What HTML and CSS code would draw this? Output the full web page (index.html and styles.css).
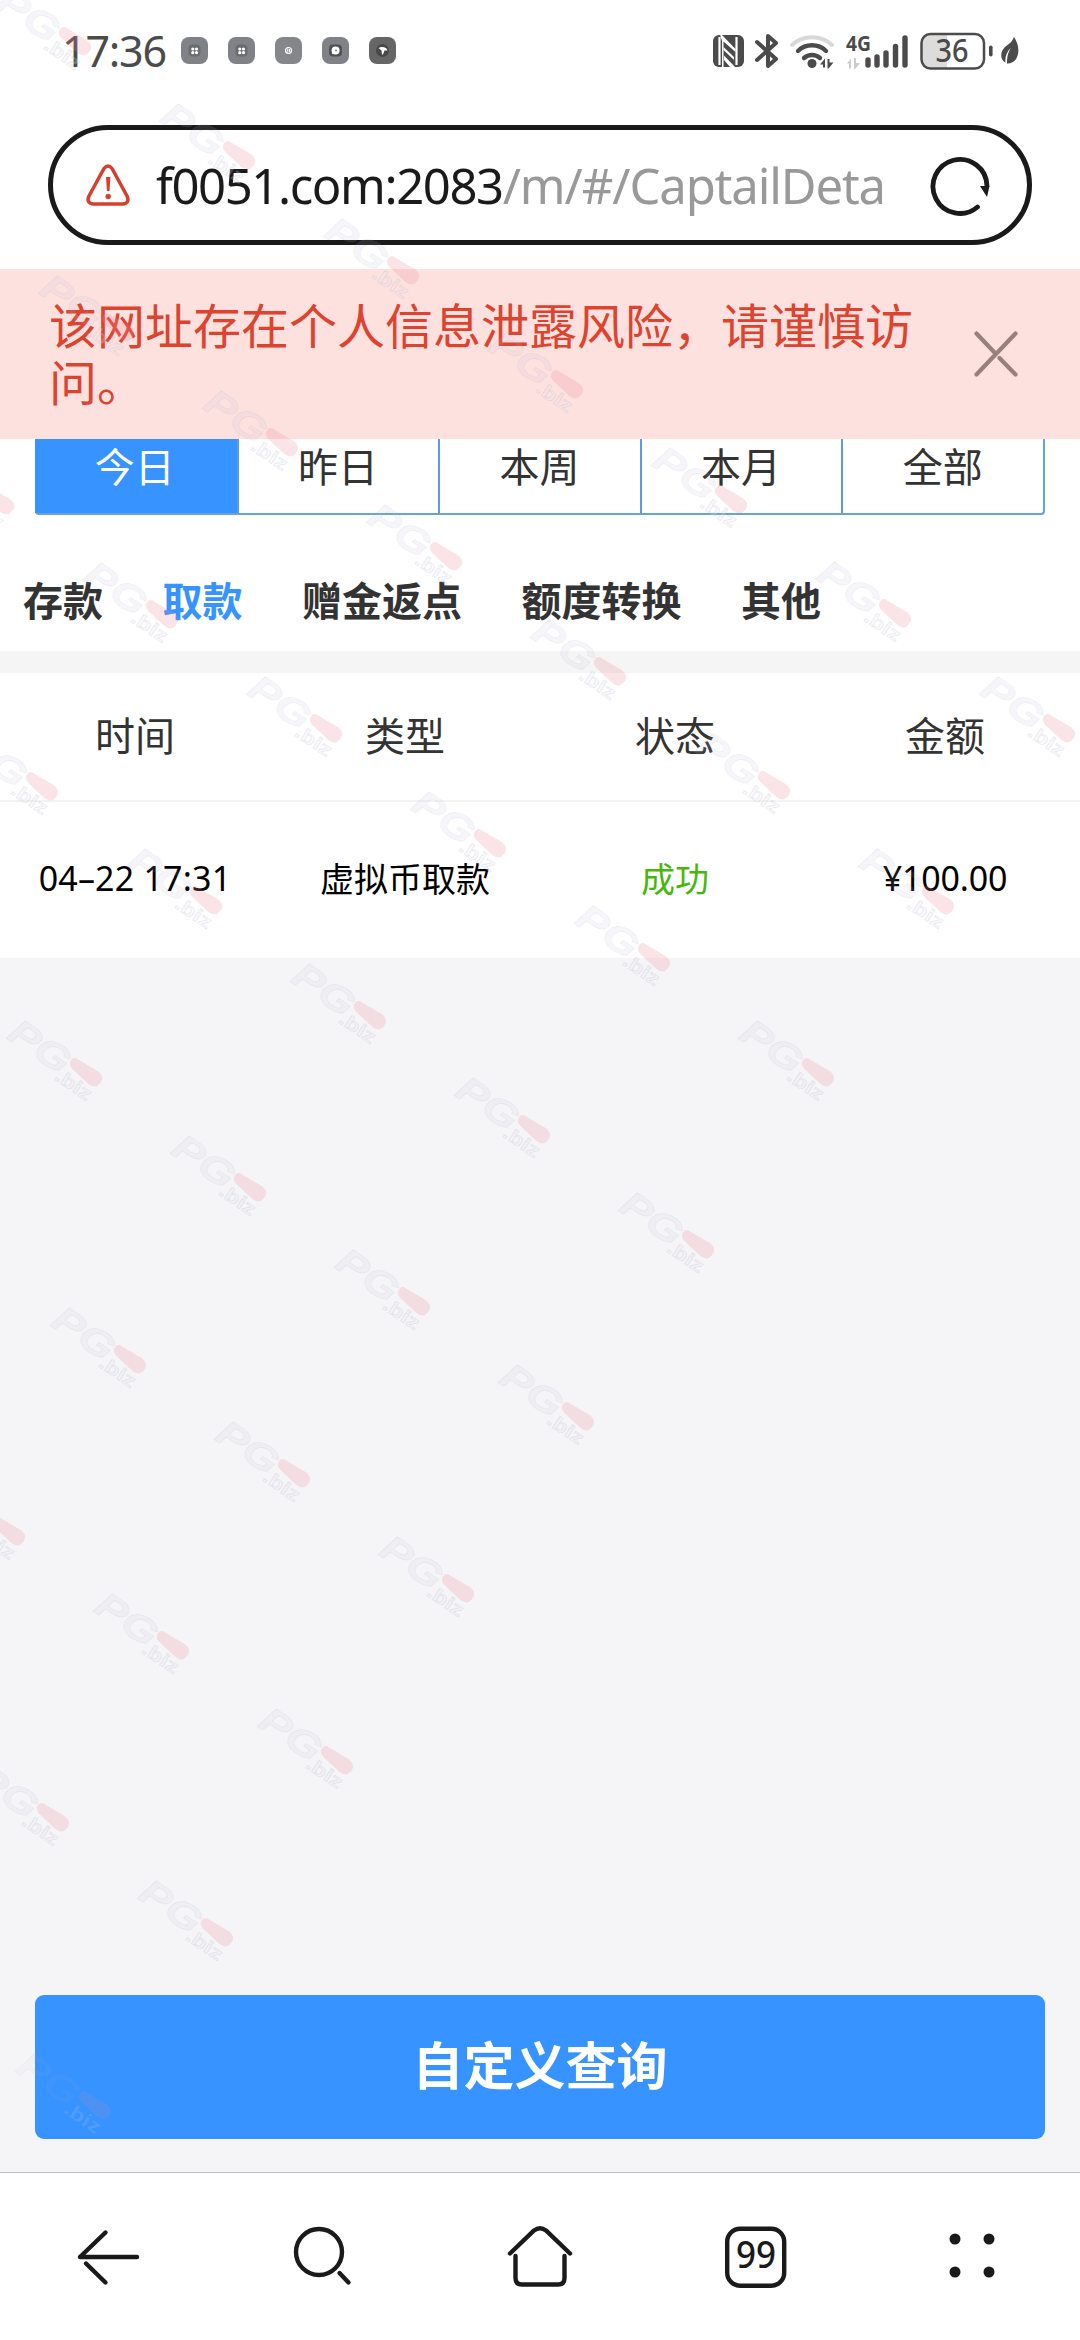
FILE: index.html
```html
<!DOCTYPE html>
<html lang="zh-CN">
<head>
<meta charset="utf-8">
<title>自定义查询</title>
<link rel="stylesheet" href="styles.css">
</head>
<body>
<div class="screen">
  <header class="status">
    <span class="clock">17:36</span>
    <div class="apps">
      <svg class="app" viewBox="0 0 27 27"><rect width="27" height="27" rx="8" fill="#808288"/><rect x="7.500" y="7.500" width="12" height="12" rx="4" fill="#6b6c70"/><g fill="#fff"><circle cx="11.800" cy="12" r="1.600"/><circle cx="15.500" cy="12" r="1.600"/><circle cx="11.800" cy="15.700" r="1.600"/><circle cx="15.500" cy="15.700" r="1.600"/></g></svg>
      <svg class="app" viewBox="0 0 27 27"><rect width="27" height="27" rx="8" fill="#808288"/><rect x="7.500" y="7.500" width="12" height="12" rx="4" fill="#6b6c70"/><g fill="#fff"><circle cx="11.800" cy="12" r="1.600"/><circle cx="15.500" cy="12" r="1.600"/><circle cx="11.800" cy="15.700" r="1.600"/><circle cx="15.500" cy="15.700" r="1.600"/></g></svg>
      <svg class="app" viewBox="0 0 27 27"><rect width="27" height="27" rx="8" fill="#858689"/><circle cx="13.500" cy="13.500" r="3" fill="none" stroke="#fff" stroke-width="1.200"/><path d="M12.800 11.500v4M14.500 12v3" stroke="#fff"/></svg>
      <svg class="app" viewBox="0 0 27 27"><rect width="27" height="27" rx="8" fill="#808288"/><rect x="7" y="7.500" width="13" height="12" rx="4" fill="#505154"/><circle cx="13.600" cy="13.500" r="4" fill="#fff"/><path d="M10 17.500v-4h4z" fill="#fff"/><circle cx="14" cy="13.500" r=".9" fill="#777"/></svg>
      <svg class="app" viewBox="0 0 27 27"><rect width="27" height="27" rx="8" fill="#666"/><circle cx="13.500" cy="13.500" r="6.500" fill="#484848"/><path d="M9.500 11q4-2 8 .5l1 2h-3l-1.500 4h-1l-.5-4z" fill="#fff"/></svg>
    </div>
    <svg class="signals" viewBox="0 0 310 44">
      <rect x="0" y="6" width="31" height="32" rx="6" fill="#4b4b4b"/>
      <path d="M6.500 8v28M23.500 8v28" stroke="#fff" stroke-width="2.200"/>
      <path d="M7 5.500h1.500L22.500 20v3L10.500 12.500V38H9V12z" fill="#fff"/>
      <path d="M10.500 18L21 28v3L10.500 21zM11 26.500L22 38h-5l-6-7z" fill="#fff"/>
      <path d="M44 13l19 17-8 7V7l8 7-19 17" fill="none" stroke="#4b4b4b" stroke-width="4" stroke-linejoin="round" stroke-linecap="round"/>
      <path d="M79 16a30 30 0 0 1 40 0" fill="none" stroke="#d8d8d8" stroke-width="4" stroke-linecap="round"/>
      <path d="M85 22a20 20 0 0 1 28 0M91 29a12 12 0 0 1 16 0" fill="none" stroke="#4b4b4b" stroke-width="4.400" stroke-linecap="round"/>
      <circle cx="99" cy="34.500" r="4.500" fill="#4b4b4b"/>
      <path d="M107 35.500l5-6v9h-2v-3zM114.500 30h2v3.500h4l-5 6h-1z" fill="#4b4b4b"/>
      <text class="net" x="133" y="22" textLength="25" lengthAdjust="spacingAndGlyphs">4G</text>
      <path d="M134 34.500l4-5v10h-2v-5zM141 29h2v5h4l-5 6h-1z" fill="#ccc"/>
      <path d="M155 31v5M164 28v8M173 24v12M182.500 17.500v18.500M192 9v27" stroke="#4b4b4b" stroke-width="5.400" stroke-linecap="round"/>
      <path d="M234 5H218q-9.500 0-9.500 9v16.500q0 9 9.500 9h16z" fill="#dcdcdc"/>
      <rect x="208.500" y="5" width="62.500" height="34.500" rx="9" fill="none" stroke="#4b4b4b" stroke-width="2.500"/>
      <text class="level" x="222.500" y="33" textLength="33" lengthAdjust="spacingAndGlyphs">36</text>
      <rect x="276" y="16.500" width="3.600" height="11" rx="1.800" fill="#4b4b4b"/>
      <path d="M301 8c6 9 6 20-1 25q-4 2-6 1.500c0-7 1-11 4-16-5 5-6 10-5.500 15-6-3-5-11-1-15 3-3 7-4 9.500-10.500z" fill="#4b4b4b"/>
    </svg>
  </header>

  <div class="address">
    <svg class="warn" viewBox="0 0 44 42"><path d="M18 4.500q4-5 8 0L41 32q3 7-4 8H7q-7-1-4-8z" fill="none" stroke="#d5402f" stroke-width="3.500"/><path d="M20 13h4.400l-.9 14h-2.600z" fill="#d5402f"/><circle cx="22.200" cy="32.500" r="2.700" fill="#d5402f"/></svg>
    <div class="url"><span class="host">f0051.com:2083</span><span class="path">/m/#/CaptailDeta</span></div>
    <svg class="reload" viewBox="0 0 64 64"><path d="M49.500 54A27 27 0 1 1 59 33" fill="none" stroke="#1a1a1a" stroke-width="4.800" stroke-linecap="round"/><path d="M52 33h9.500l-2.500 11z" fill="#1a1a1a"/></svg>
  </div>

  <div class="notice">
    <p class="notice-text">该网址存在个人信息泄露风险，请谨慎访问。</p>
    <svg class="close" viewBox="0 0 44 46"><path d="M2.500 2.500l18 19M25.500 27l16 16.500M41.500 2.500l-39 41" fill="none" stroke="#97807e" stroke-width="4.200" stroke-linecap="round"/></svg>
  </div>

  <nav class="ranges">
    <span class="range active">今日</span><span class="range">昨日</span><span class="range">本周</span><span class="range">本月</span><span class="range">全部</span>
  </nav>

  <nav class="kinds">
    <span>存款</span><span class="current">取款</span><span>赠金返点</span><span>额度转换</span><span>其他</span>
  </nav>

  <section class="table">
    <div class="row head"><span>时间</span><span>类型</span><span>状态</span><span>金额</span></div>
    <div class="row body"><span class="date">04–22 17:31</span><span>虚拟币取款</span><span class="ok">成功</span><span class="sum">¥100.00</span></div>
  </section>

  <main class="rest"><button class="query">自定义查询</button></main>

  <footer class="toolbar">
    <svg viewBox="0 0 72 72"><path d="M8 36h57M33.500 11.500L8 36M14 42.500l19.500 19" fill="none" stroke="#1a1a1a" stroke-width="4.400" stroke-linecap="round" stroke-linejoin="round"/></svg>
    <svg viewBox="0 0 72 72"><circle cx="31" cy="31" r="23" fill="none" stroke="#1a1a1a" stroke-width="4.400"/><path d="M51.500 52l9 9.500" stroke="#1a1a1a" stroke-width="4.400" stroke-linecap="round"/></svg>
    <svg viewBox="0 0 72 72"><path d="M6 32.500L30 9.500q6-4.500 12 0l24 23M11.500 35v22q0 6.500 6.500 6.500h36q6.500 0 6.500-6.500V35" fill="none" stroke="#1a1a1a" stroke-width="4.400" stroke-linecap="round"/></svg>
    <svg viewBox="0 0 72 72"><rect x="7.200" y="7.700" width="57" height="57" rx="13" fill="none" stroke="#1a1a1a" stroke-width="4.400"/><text class="count" x="16" y="47" textLength="40" lengthAdjust="spacingAndGlyphs">99</text></svg>
    <svg viewBox="0 0 72 72"><g fill="#1a1a1a"><circle cx="19" cy="18" r="5.500"/><circle cx="53" cy="18" r="5.500"/><circle cx="19" cy="51" r="5.500"/><circle cx="53" cy="51" r="5.500"/></g></svg>
  </footer>

  <svg class="marks" viewBox="0 0 1080 2340">
    <defs>
      <g id="mark">
        <g transform="rotate(34)">
          <text class="mark-name" x="-86" y="17" textLength="67" lengthAdjust="spacingAndGlyphs">PG</text>
          <text class="mark-tld" x="-23" y="24" textLength="40" lengthAdjust="spacingAndGlyphs">.biz</text>
        </g>
        <path transform="rotate(38)" d="M-14-5L9-8Q18-8 18 0T9 8L-13 6Q-19 5-19 0T-14-5z" fill="#ee8c9b" opacity=".23"/>
      </g>
    </defs>
    <use href="#mark" x="75" y="41"/><use href="#mark" x="239" y="155"/><use href="#mark" x="403" y="270"/><use href="#mark" x="567" y="384"/><use href="#mark" x="731" y="499"/><use href="#mark" x="895" y="613"/><use href="#mark" x="1059" y="728"/>
    <use href="#mark" x="118" y="327"/><use href="#mark" x="282" y="442"/><use href="#mark" x="446" y="556"/><use href="#mark" x="610" y="671"/><use href="#mark" x="774" y="785"/><use href="#mark" x="938" y="900"/>
    <use href="#mark" x="-2" y="500"/><use href="#mark" x="162" y="614"/><use href="#mark" x="326" y="728"/><use href="#mark" x="490" y="843"/><use href="#mark" x="654" y="957"/><use href="#mark" x="818" y="1072"/>
    <use href="#mark" x="42" y="786"/><use href="#mark" x="206" y="900"/><use href="#mark" x="370" y="1015"/><use href="#mark" x="534" y="1129"/><use href="#mark" x="698" y="1244"/>
    <use href="#mark" x="86" y="1072"/><use href="#mark" x="250" y="1187"/><use href="#mark" x="414" y="1301"/><use href="#mark" x="578" y="1416"/>
    <use href="#mark" x="130" y="1359"/><use href="#mark" x="294" y="1473"/><use href="#mark" x="458" y="1588"/>
    <use href="#mark" x="9" y="1531"/><use href="#mark" x="173" y="1645"/><use href="#mark" x="337" y="1760"/>
    <use href="#mark" x="53" y="1817"/><use href="#mark" x="217" y="1932"/>
    <use href="#mark" x="95" y="2105" opacity=".55"/>
  </svg>
</div>
</body>
</html>
```

FILE: styles.css
```css
* { box-sizing: border-box; }

body {
  margin: 0;
  background: #fff;
  font-family: "Noto Sans", "Noto Sans CJK SC", sans-serif;
  color: #333;
}

.screen {
  position: relative;
  display: flex;
  flex-direction: column;
  width: 1080px;
  height: 2340px;
  overflow: hidden;
  background: #fff;
}

.status {
  display: flex;
  align-items: center;
  height: 101px;
  padding: 0 57px 0 62px;
  flex: none;
}

.clock {
  width: 119px;
  font-size: 43px;
  letter-spacing: -1.2px;
  color: #4b4b4b;
  white-space: nowrap;
}

.apps { display: flex; gap: 20px; }
.app { width: 27px; height: 27px; }

.signals {
  width: 310px;
  height: 44px;
  margin-left: auto;
}

.net { font-size: 22px; font-weight: 700; fill: #4b4b4b; }
.level { font-size: 32px; font-weight: 500; fill: #4b4b4b; }

.address {
  display: flex;
  align-items: center;
  flex: none;
  height: 120px;
  margin: 24px 48px 24px;
  padding: 0 35px 0 33px;
  border: 5px solid #1a1a1a;
  border-radius: 60px;
}

.warn { width: 44px; height: 42px; flex: none; }

.url {
  width: 730px;
  margin: 0 0 1px 26px;
  font-size: 49px;
  white-space: nowrap;
}

.host { color: #1a1a1a; letter-spacing: -1.4px; }
.path { color: #999; letter-spacing: -1.1px; }
.reload { width: 64px; height: 64px; margin-left: auto; }

.notice {
  display: flex;
  justify-content: space-between;
  flex: none;
  height: 170px;
  padding: 26px 62px 0 49px;
  background: #fde1df;
}

.notice-text {
  width: 870px;
  margin: 0;
  font: 48px/57px "Noto Sans CJK SC", sans-serif;
  color: #dd432e;
}

.close { width: 44px; height: 46px; margin-top: 36px; }

.ranges {
  display: grid;
  grid-template-columns: repeat(5, 1fr);
  flex: none;
  height: 76px;
  margin: 0 35px;
  border: solid #68a2e0;
  border-width: 0 2px 2px 0;
  border-radius: 0 0 4px 4px;
}

.range {
  padding-right: 1px;
  border-left: 2px solid #5c9ce4;
  font-size: 40px;
  line-height: 55px;
  text-align: center;
}

.range.active { padding-right: 4px; background: #3693ff; border-color: #3693ff; color: #fff; }

.kinds {
  display: flex;
  gap: 59.500px;
  flex: none;
  height: 136px;
  padding-left: 23px;
  font-size: 40px;
  font-weight: 700;
  line-height: 172px;
  white-space: nowrap;
}

.current { color: #3693ff; }

.table { flex: none; border-top: 22px solid #f5f5f5; }

.row {
  display: grid;
  grid-template-columns: repeat(4, 270px);
  align-items: center;
  text-align: center;
  white-space: nowrap;
}

.head { height: 129px; padding-bottom: 6px; border-bottom: 2px solid #f3f3f3; font-size: 40px; }
.body { height: 156px; padding-bottom: 5px; font-size: 34px; color: #000; }
.date { letter-spacing: .2px; }
.sum { letter-spacing: -.2px; }
.ok { color: #46b80c; }

.rest {
  flex: 1;
  display: flex;
  flex-direction: column;
  justify-content: flex-end;
  padding: 0 35px 33px;
  background: #f5f5f7;
}

.query {
  height: 144px;
  padding: 0 0 8px;
  border: 0;
  border-radius: 9px;
  background: #3693ff;
  color: #fff;
  font: 700 51px "Noto Sans CJK SC", sans-serif;
}

.toolbar {
  display: flex;
  justify-content: space-around;
  align-items: center;
  flex: none;
  height: 168px;
  border-top: 1px solid #bdbdbd;
  background: #fff;
}

.toolbar svg { width: 72px; height: 72px; }
.count { font-size: 38px; font-weight: 500; fill: #1a1a1a; }

/* Repeating brand watermark laid over the whole screen */
.marks {
  position: absolute;
  inset: 0;
  width: 1080px;
  height: 2340px;
  pointer-events: none;
}

.mark-name {
  font: italic 700 37px "Liberation Sans", sans-serif;
  fill: rgba(190, 190, 215, .13);
  stroke: rgba(140, 140, 165, .09);
  stroke-width: 1px;
}

.mark-tld {
  font: 700 19px "Liberation Sans", sans-serif;
  fill: rgba(235, 235, 245, .25);
  stroke: rgba(130, 130, 160, .13);
  stroke-width: 1px;
}
```
